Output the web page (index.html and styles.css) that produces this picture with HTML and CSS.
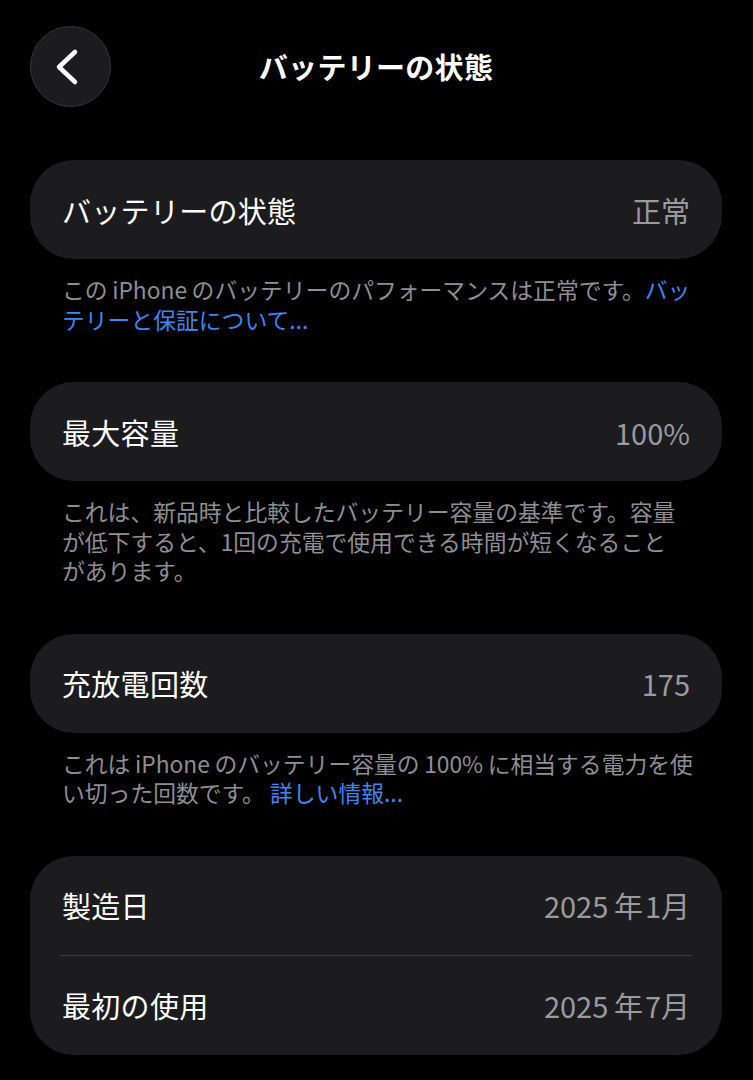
FILE: index.html
```html
<!DOCTYPE html>
<html lang="ja">
<head>
<meta charset="utf-8">
<title>バッテリーの状態</title>
<link rel="stylesheet" href="styles.css">
</head>
<body>
<div class="page">
  <header class="header">
    <button class="back" aria-label="戻る">
      <svg width="81" height="81" viewBox="0 0 81 81"><path d="M45 26 L29 41 L45 56" fill="none" stroke="#fff" stroke-width="4.5" stroke-linecap="round" stroke-linejoin="round"/></svg>
    </button>
    <h1 class="title">バッテリーの状態</h1>
    <span class="spacer"></span>
  </header>

  <section class="group">
    <div class="card">
      <div class="row"><span class="label">バッテリーの状態</span><span class="value">正常</span></div>
    </div>
    <p class="note">この&#8201;iPhone&#8201;のバッテリーのパフォーマンスは正常です。<a class="link">バッ<br>テリーと保証について...</a></p>
  </section>

  <section class="group">
    <div class="card">
      <div class="row"><span class="label">最大容量</span><span class="value">100%</span></div>
    </div>
    <p class="note">これは、新品時と比較したバッテリー容量の基準です。容量<br>が低下すると、1回の充電で使用できる時間が短くなること<br>があります。</p>
  </section>

  <section class="group">
    <div class="card">
      <div class="row"><span class="label">充放電回数</span><span class="value">175</span></div>
    </div>
    <p class="note">これは&#8201;iPhone&#8201;のバッテリー容量の&#8201;100%&#8201;に相当する電力を使<br>い切った回数です。 <a class="link">詳しい情報...</a></p>
  </section>

  <section class="group">
    <div class="card">
      <div class="row"><span class="label">製造日</span><span class="value">2025&#8201;年&#8202;1月</span></div>
      <div class="divider"></div>
      <div class="row"><span class="label">最初の使用</span><span class="value">2025&#8201;年&#8202;7月</span></div>
    </div>
  </section>
</div>
</body>
</html>
```

FILE: styles.css
```css
* { box-sizing: border-box; }

html, body {
  margin: 0;
  padding: 0;
  background: #000;
}

body {
  font-family: "Noto Sans CJK JP", "Noto Sans", sans-serif;
  color: #fff;
}

.page {
  padding: 26px 31px 0 30px;
}

.header {
  display: grid;
  grid-template-columns: 81px 1fr 81px;
  align-items: center;
  height: 81px;
}

.back {
  width: 81px;
  height: 81px;
  padding: 0;
  margin: 0;
  border-radius: 50%;
  background: #1c1c1e;
  border: 1px solid #353537;
  display: flex;
  align-items: center;
  justify-content: center;
}

.back svg {
  display: block;
  margin: -1px;
}

.title {
  margin: 0;
  text-align: center;
  font-size: 29px;
  font-weight: 700;
  line-height: 1;
  letter-spacing: 0.3px;
}

.group {
  margin-top: 48px;
}

.group:first-of-type {
  margin-top: 53px;
}

.card {
  background: #1c1c1e;
  border-radius: 44px;
}

.row {
  height: 99px;
  display: flex;
  align-items: center;
  justify-content: space-between;
  padding: 0 32px;
}

.label {
  font-size: 29px;
  font-weight: 400;
  color: #fff;
  letter-spacing: 0.3px;
}

.value {
  font-size: 29px;
  color: #9a9aa0;
}

.divider {
  height: 1px;
  background: #3a3a3c;
  margin: 0 30px;
}

.note {
  margin: 0;
  padding: 16px 10px 0 32px;
  font-size: 22.8px;
  line-height: 29.5px;
  color: #8e8e93;
  white-space: nowrap;
}

.link {
  color: #3f86f2;
  text-decoration: none;
}
```
